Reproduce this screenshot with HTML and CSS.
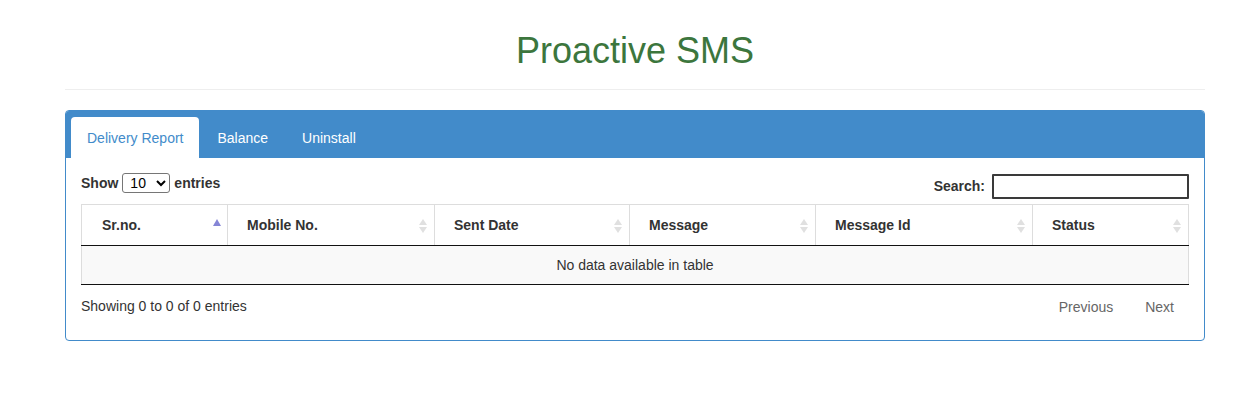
FILE: index.html
```html
<!DOCTYPE html>
<html>
<head>
<meta charset="utf-8">
<link rel="stylesheet" href="styles.css">
</head>
<body>
<div class="container">
  <div class="page-header">
    <h1 class="title">Proactive SMS</h1>
  </div>
  <div class="panel">
    <div class="panel-heading">
      <ul class="tabs">
        <li class="tab active">Delivery Report</li>
        <li class="tab">Balance</li>
        <li class="tab">Uninstall</li>
      </ul>
    </div>
    <div class="panel-body">
      <div class="controls">
        <label class="length">Show <select class="length-select"><option>10</option><option>25</option><option>50</option><option>100</option></select> entries</label>
        <label class="search">Search:<input class="search-input" type="search"></label>
      </div>
      <table class="data">
        <thead>
          <tr>
            <th class="c1 sort-asc">Sr.no.</th>
            <th class="c2 sort-both">Mobile No.</th>
            <th class="c3 sort-both">Sent Date</th>
            <th class="c4 sort-both">Message</th>
            <th class="c5 sort-both">Message Id</th>
            <th class="c6 sort-both">Status</th>
          </tr>
        </thead>
        <tbody>
          <tr class="odd"><td class="empty" colspan="6">No data available in table</td></tr>
        </tbody>
      </table>
      <div class="footer">
        <div class="info">Showing 0 to 0 of 0 entries</div>
        <div class="paginate">
          <span class="page-btn">Previous</span>
          <span class="page-btn">Next</span>
        </div>
      </div>
    </div>
  </div>
</div>
</body>
</html>
```

FILE: styles.css
```css
* { box-sizing: border-box; }
html, body { margin: 0; padding: 0; background: #fff; }
body {
  font-family: "Liberation Sans", Arial, Helvetica, sans-serif;
  font-size: 14px;
  line-height: 20px;
  color: #333;
}
.container {
  width: 1140px;
  margin-left: 65px;
}
.page-header {
  margin-top: 31px;
  padding-bottom: 18px;
  border-bottom: 1px solid #eee;
  margin-bottom: 20px;
}
.title {
  margin: 0;
  text-align: center;
  font-size: 36px;
  font-weight: 500;
  line-height: 40px;
  color: #3c763d;
}
.panel {
  border: 1px solid #428bca;
  border-radius: 4px;
  background: #fff;
}
.panel-heading {
  background: #428bca;
  padding: 6px 5px 0;
  border-radius: 3px 3px 0 0;
}
.tabs {
  list-style: none;
  margin: 0;
  padding: 0;
  display: flex;
  gap: 2px;
}
.tab {
  padding: 10px 15px 10px;
  border: 1px solid transparent;
  border-bottom: 0;
  border-radius: 4px 4px 0 0;
  color: #fff;
  line-height: 20px;
}
.tab.active {
  background: #fff;
  color: #428bca;
}
.panel-body {
  padding: 15px 15px 15px;
}
.controls {
  display: flex;
  justify-content: space-between;
  align-items: flex-start;
  height: 26px;
  margin-bottom: 5px;
}
.length, .search {
  font-weight: bold;
  display: flex;
  align-items: center;
}
.length { height: 20px; }
.length-select {
  width: 48px;
  height: 20px;
  margin: 0 4px;
  font-family: "Liberation Sans", Arial, sans-serif;
  font-size: 14px;
  border: 1px solid #767676;
  border-radius: 3px;
  background: #fff;
  color: #000;
  padding: 0 0 0 3px;
}
.search { height: 26px; margin-top: 0; }
.search-input {
  width: 197px;
  height: 25px;
  margin-left: 7px;
  border: 2px solid #3a3a3a;
  border-radius: 1px;
  background: #fff;
  outline: none;
}
.data {
  width: 100%;
  border-collapse: collapse;
  table-layout: fixed;
}
.c1 { width: 146px; }
.c2 { width: 207px; }
.c3 { width: 195px; }
.c4 { width: 186px; }
.c5 { width: 217px; }
.c6 { width: 156px; }
.data th {
  position: relative;
  text-align: left;
  font-weight: bold;
  padding: 10px 18px 10px 19px;
  line-height: 20px;
  border: 1px solid #ddd;
  border-bottom: 1px solid #111;
}
.data th.c1 { padding-left: 20px; }
.data th::before, .data th::after {
  content: "";
  position: absolute;
  right: 7px;
  width: 0;
  height: 0;
  border-left: 4px solid transparent;
  border-right: 4px solid transparent;
}
.data th.sort-both::before {
  top: 14px;
  border-bottom: 6px solid #e0e0e0;
}
.data th.sort-both::after {
  top: 22px;
  border-top: 6px solid #e0e0e0;
}
.data th.sort-asc::before {
  top: 14px;
  right: 6px;
  border-left-width: 4.5px;
  border-right-width: 4.5px;
  border-bottom: 7px solid #8585d6;
}
.data td {
  padding: 9px 10px;
  line-height: 20px;
  border-left: 1px solid #ddd;
  border-right: 1px solid #ddd;
  border-bottom: 1px solid #111;
}
.data tr.odd td { background: #f9f9f9; }
.data td.empty { text-align: center; }
.footer {
  display: flex;
  justify-content: space-between;
  align-items: flex-start;
}
.info {
  padding-top: 11px;
  line-height: 20px;
}
.paginate {
  padding-top: 4px;
  display: flex;
}
.page-btn {
  padding: 8px 14px;
  margin-left: 4px;
  color: #666;
  line-height: 20px;
}
.page-btn:last-child { padding-right: 15px; }
```
